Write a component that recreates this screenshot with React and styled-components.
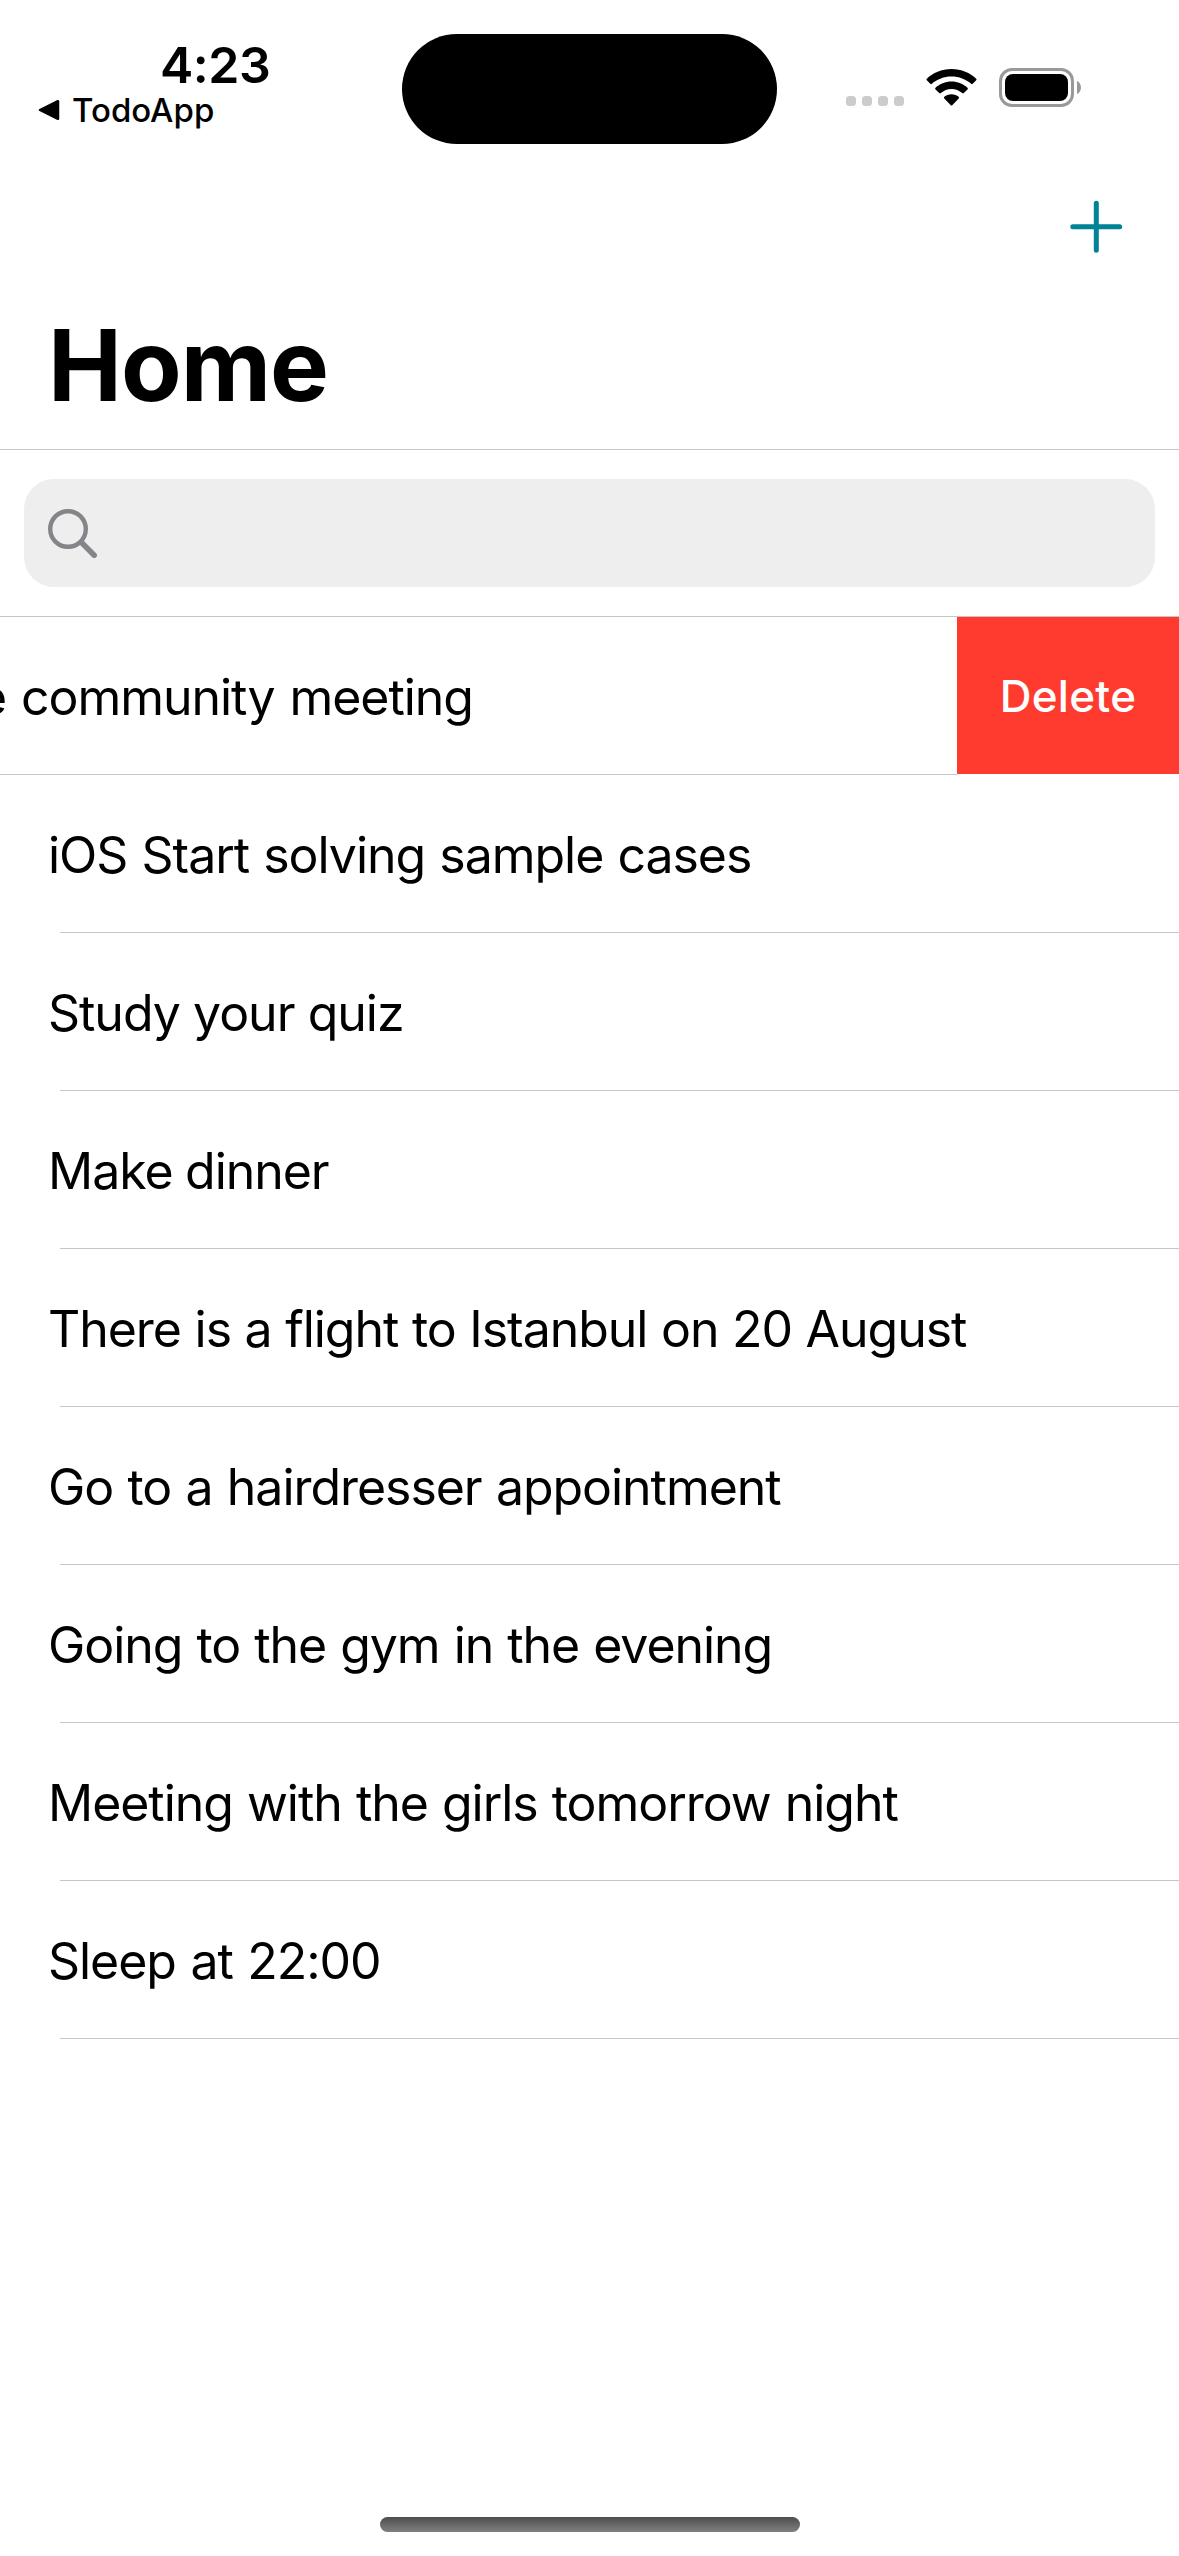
import React from "react";
import styled, { createGlobalStyle } from "styled-components";

const GlobalStyle = createGlobalStyle`
  *, *::before, *::after { box-sizing: border-box; }
  body { margin: 0; background: #fff; }
`;

const Screen = styled.div`
  width: 1179px;
  height: 2556px;
  display: flex;
  flex-direction: column;
  overflow: hidden;
  background: #fff;
  color: #000;
  font-family: Inter, "Liberation Sans", sans-serif;
`;

const StatusBar = styled.header`
  display: grid;
  grid-template-columns: 402px 375px 1fr;
  height: 177px;
  flex: none;
`;

const StatusLeft = styled.div`
  display: flex;
  flex-direction: column;
  padding: 35px 0 0 38px;
`;

const Clock = styled.div`
  height: 58px;
  padding-left: 122px;
  font-size: 50px;
  line-height: 60px;
  font-weight: 600;
  letter-spacing: -0.5px;
`;

const BackLink = styled.div`
  display: flex;
  align-items: center;
  gap: 12px;
  height: 34px;
  font-size: 33px;
  line-height: 34px;
  font-weight: 500;
`;

const Island = styled.div`
  height: 110px;
  margin-top: 34px;
  border-radius: 55px;
  background: #000;
`;

const StatusRight = styled.div`
  display: flex;
  align-items: flex-start;
  padding: 68px 0 0 69px;
`;

const Dots = styled.div`
  display: flex;
  gap: 6px;
  margin: 28px 22px 0 0;
`;

const Dot = styled.span`
  width: 10px;
  height: 10px;
  border-radius: 3.5px;
  background: #ccc;
`;

const WifiIcon = styled.svg`
  width: 51px;
  height: 39px;
  margin-right: 22px;
`;

const Battery = styled.div`
  width: 75px;
  height: 39px;
  padding: 3px;
  border: 3px solid #999;
  border-radius: 13px;
`;

const BatteryLevel = styled.div`
  height: 27px;
  border-radius: 8px;
  background: #000;
`;

const BatteryTip = styled.svg`
  width: 5px;
  height: 13px;
  margin: 13px 0 0 3px;
`;

const Toolbar = styled.nav`
  display: flex;
  justify-content: flex-end;
  height: 111px;
  padding: 23px 56px 0 0;
  flex: none;
`;

const AddIcon = styled.svg`
  width: 54px;
  height: 54px;
`;

const Title = styled.h1`
  height: 162px;
  margin: 0;
  padding: 17px 0 0 48px;
  border-bottom: 1px solid #c6c6c8;
  font-size: 99px;
  line-height: 120px;
  font-weight: 700;
  letter-spacing: -1px;
  flex: none;
`;

const SearchSection = styled.div`
  height: 167px;
  padding: 29px 24px;
  border-bottom: 1px solid #c6c6c8;
  flex: none;
`;

const SearchField = styled.div`
  display: flex;
  align-items: center;
  height: 108px;
  padding-left: 24px;
  border-radius: 30px;
  background: #eee;
`;

const SearchIcon = styled.svg`
  width: 50px;
  height: 50px;
`;

const List = styled.ul`
  margin: 0;
  padding: 0;
  list-style: none;
  flex: 1;
`;

const Row = styled.li`
  display: flex;
  flex-direction: column;
  justify-content: space-between;
  height: 158px;
  font-size: 50px;
  line-height: 60px;
  letter-spacing: -1.04px;
  word-spacing: ${(p) => p.$wordSpacing || 0}px;
  white-space: nowrap;
`;

const SwipedRow = styled(Row)`
  flex-direction: row;
`;

const RowLabel = styled.span`
  padding: 50px 0 0 48px;
`;

const SwipedContent = styled.div`
  display: flex;
  justify-content: flex-end;
  width: 957px;
  padding: 50px 484px 0 0;
  border-bottom: 1px solid #c6c6c8;
  overflow: hidden;
`;

const DeleteButton = styled.button`
  width: 222px;
  height: 157px;
  padding: 0;
  border: 0;
  background: #ff3b30;
  color: #fff;
  font: 500 44px/54px Inter, "Liberation Sans", sans-serif;
  letter-spacing: 0.3px;
`;

const Separator = styled.div`
  height: 1px;
  margin-left: 60px;
  background: #c6c6c8;
`;

const HomeArea = styled.footer`
  display: flex;
  justify-content: center;
  height: 39px;
  flex: none;
`;

const HomeIndicator = styled.div`
  width: 420px;
  height: 15px;
  border-radius: 8px;
  background: linear-gradient(#4d4d4d, #808080);
`;

const todos = [
  { text: "iOS Start solving sample cases", wordSpacing: 1.2 },
  { text: "Study your quiz", wordSpacing: 0.3 },
  { text: "Make dinner", wordSpacing: -0.5 },
  { text: "There is a flight to Istanbul on 20 August", wordSpacing: 0.6 },
  { text: "Go to a hairdresser appointment", wordSpacing: 1.25 },
  { text: "Going to the gym in the evening", wordSpacing: 1 },
  { text: "Meeting with the girls tomorrow night", wordSpacing: 1.1 },
  { text: "Sleep at 22:00", wordSpacing: 1.5 },
];

export default function App() {
  return (
    <Screen>
      <GlobalStyle />
      <StatusBar>
        <StatusLeft>
          <Clock>4:23</Clock>
          <BackLink>
            <svg width="22" height="22" viewBox="0 0 22 22">
              <path d="M2 11 20 2.2V19.8Z" stroke="#000" strokeWidth="2.5" strokeLinejoin="round" />
            </svg>
            TodoApp
          </BackLink>
        </StatusLeft>
        <Island />
        <StatusRight>
          <Dots>
            <Dot />
            <Dot />
            <Dot />
            <Dot />
          </Dots>
          <WifiIcon viewBox="0 0 51 39">
            <path d="M25.500 1C35.500 1 44 4.800 50.200 10.700Q51 11.500 50.200 12.300L46.700 15.800Q45.900 16.600 45.100 15.800C39.800 11.200 33 8.600 25.500 8.600S11.200 11.200 5.900 15.800Q5.100 16.600 4.300 15.800L.8 12.300Q0 11.500 .8 10.700C7 4.800 15.500 1 25.500 1Z" />
            <path d="M25.500 13.600C31.800 13.600 37.200 16 41.500 19.800Q42.300 20.600 41.500 21.400L37.800 25.100Q37 25.900 36.200 25.100C33.300 22.600 29.600 21 25.500 21S17.700 22.600 14.800 25.100Q14 25.900 13.200 25.100L9.500 21.400Q8.700 20.600 9.500 19.800C13.800 16 19.200 13.600 25.500 13.600Z" />
            <path d="M25.500 26.200C28.300 26.200 30.800 27.200 32.700 28.800Q33.500 29.600 32.700 30.400L26.200 37.200Q25.500 37.900 24.800 37.200L18.300 30.400Q17.500 29.600 18.300 28.800C20.200 27.200 22.700 26.200 25.500 26.200Z" />
          </WifiIcon>
          <Battery>
            <BatteryLevel />
          </Battery>
          <BatteryTip viewBox="0 0 5 13">
            <path d="M0 0C5.300 2.200 5.300 10.800 0 13Z" fill="#999" />
          </BatteryTip>
        </StatusRight>
      </StatusBar>
      <Toolbar>
        <AddIcon viewBox="0 0 54 54" stroke="#008394" strokeWidth="5" strokeLinecap="round">
          <path d="M27.300 3.300V50.200M3.800 26.700H50.700" />
        </AddIcon>
      </Toolbar>
      <Title>Home</Title>
      <SearchSection>
        <SearchField>
          <SearchIcon viewBox="0 0 50 50" fill="none" stroke="#858589" strokeLinecap="round">
            <circle cx="20" cy="21" r="17.800" strokeWidth="4.400" />
            <path d="M33.500 34.500 46.200 47.200" strokeWidth="5.500" />
          </SearchIcon>
        </SearchField>
      </SearchSection>
      <List>
        <SwipedRow $wordSpacing={2}>
          <SwipedContent>e community meeting</SwipedContent>
          <DeleteButton>Delete</DeleteButton>
        </SwipedRow>
        {todos.map((todo) => (
          <Row key={todo.text} $wordSpacing={todo.wordSpacing}>
            <RowLabel>{todo.text}</RowLabel>
            <Separator />
          </Row>
        ))}
      </List>
      <HomeArea>
        <HomeIndicator />
      </HomeArea>
    </Screen>
  );
}
